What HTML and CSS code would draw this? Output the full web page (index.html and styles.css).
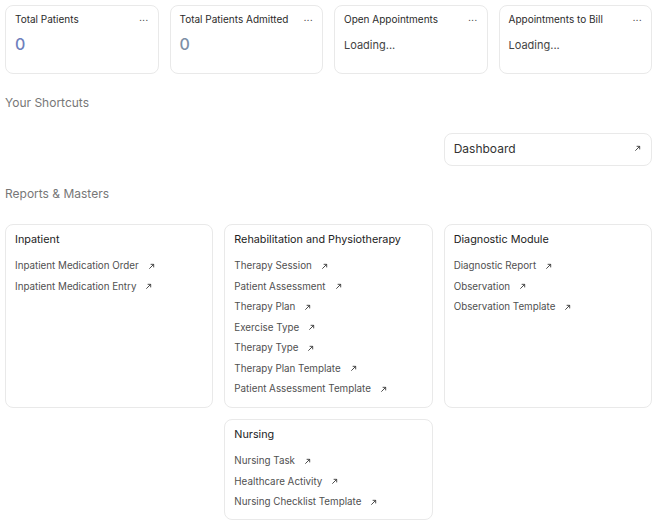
FILE: index.html
```html
<!DOCTYPE html>
<html lang="en">
<head>
	<meta charset="UTF-8">
	<title>Healthcare</title>
	<link rel="stylesheet" href="styles.css">
</head>
<body>
	<div class="page">
		<div class="numbers">
			<div class="num-card">
				<div class="num-head"><span>Total Patients</span><span class="dots">...</span></div>
				<div class="num-value blue">0</div>
			</div>
			<div class="num-card">
				<div class="num-head"><span>Total Patients Admitted</span><span class="dots">...</span></div>
				<div class="num-value grey">0</div>
			</div>
			<div class="num-card">
				<div class="num-head"><span>Open Appointments</span><span class="dots">...</span></div>
				<div class="num-loading">Loading...</div>
			</div>
			<div class="num-card">
				<div class="num-head"><span>Appointments to Bill</span><span class="dots">...</span></div>
				<div class="num-loading">Loading...</div>
			</div>
		</div>

		<h2 class="section-title">Your Shortcuts</h2>
		<div class="grid shortcuts">
			<div></div>
			<div></div>
			<a class="shortcut" href="javascript:;">
				<span>Dashboard</span>
				<svg class="arrow" viewBox="0 0 8 8"><path d="M1.5 6.5 L6.5 1.5 M3 1.5 H6.5 V5"/></svg>
			</a>
		</div>

		<h2 class="section-title">Reports &amp; Masters</h2>
		<div class="grid reports">
			<div class="link-card">
				<div class="card-title">Inpatient</div>
				<a class="link" href="javascript:;">Inpatient Medication Order<svg class="arrow" viewBox="0 0 8 8"><path d="M1.5 6.5 L6.5 1.5 M3 1.5 H6.5 V5"/></svg></a>
				<a class="link" href="javascript:;">Inpatient Medication Entry<svg class="arrow" viewBox="0 0 8 8"><path d="M1.5 6.5 L6.5 1.5 M3 1.5 H6.5 V5"/></svg></a>
			</div>
			<div class="link-card">
				<div class="card-title">Rehabilitation and Physiotherapy</div>
				<a class="link" href="javascript:;">Therapy Session<svg class="arrow" viewBox="0 0 8 8"><path d="M1.5 6.5 L6.5 1.5 M3 1.5 H6.5 V5"/></svg></a>
				<a class="link" href="javascript:;">Patient Assessment<svg class="arrow" viewBox="0 0 8 8"><path d="M1.5 6.5 L6.5 1.5 M3 1.5 H6.5 V5"/></svg></a>
				<a class="link" href="javascript:;">Therapy Plan<svg class="arrow" viewBox="0 0 8 8"><path d="M1.5 6.5 L6.5 1.5 M3 1.5 H6.5 V5"/></svg></a>
				<a class="link" href="javascript:;">Exercise Type<svg class="arrow" viewBox="0 0 8 8"><path d="M1.5 6.5 L6.5 1.5 M3 1.5 H6.5 V5"/></svg></a>
				<a class="link" href="javascript:;">Therapy Type<svg class="arrow" viewBox="0 0 8 8"><path d="M1.5 6.5 L6.5 1.5 M3 1.5 H6.5 V5"/></svg></a>
				<a class="link" href="javascript:;">Therapy Plan Template<svg class="arrow" viewBox="0 0 8 8"><path d="M1.5 6.5 L6.5 1.5 M3 1.5 H6.5 V5"/></svg></a>
				<a class="link" href="javascript:;">Patient Assessment Template<svg class="arrow" viewBox="0 0 8 8"><path d="M1.5 6.5 L6.5 1.5 M3 1.5 H6.5 V5"/></svg></a>
			</div>
			<div class="link-card">
				<div class="card-title">Diagnostic Module</div>
				<a class="link" href="javascript:;">Diagnostic Report<svg class="arrow" viewBox="0 0 8 8"><path d="M1.5 6.5 L6.5 1.5 M3 1.5 H6.5 V5"/></svg></a>
				<a class="link" href="javascript:;">Observation<svg class="arrow" viewBox="0 0 8 8"><path d="M1.5 6.5 L6.5 1.5 M3 1.5 H6.5 V5"/></svg></a>
				<a class="link" href="javascript:;">Observation Template<svg class="arrow" viewBox="0 0 8 8"><path d="M1.5 6.5 L6.5 1.5 M3 1.5 H6.5 V5"/></svg></a>
			</div>
			<div></div>
			<div class="link-card">
				<div class="card-title">Nursing</div>
				<a class="link" href="javascript:;">Nursing Task<svg class="arrow" viewBox="0 0 8 8"><path d="M1.5 6.5 L6.5 1.5 M3 1.5 H6.5 V5"/></svg></a>
				<a class="link" href="javascript:;">Healthcare Activity<svg class="arrow" viewBox="0 0 8 8"><path d="M1.5 6.5 L6.5 1.5 M3 1.5 H6.5 V5"/></svg></a>
				<a class="link" href="javascript:;">Nursing Checklist Template<svg class="arrow" viewBox="0 0 8 8"><path d="M1.5 6.5 L6.5 1.5 M3 1.5 H6.5 V5"/></svg></a>
			</div>
		</div>
	</div>
</body>
</html>
```

FILE: styles.css
```css
*{padding:0; margin:0; box-sizing:border-box;}
body{background:#fff; font-family:Inter, "Liberation Sans", sans-serif; color:#383838;}
a{text-decoration:none; color:inherit;}
.page{padding:5px 4px 0 5px;}

.numbers{display:grid; grid-template-columns:repeat(4, 1fr); gap:11px;}
.num-card{height:69px; border:1px solid #e9e9e9; border-radius:8px; padding:7px 9px 0 9px;}
.num-head{display:flex; justify-content:space-between; align-items:center; font-size:10px; color:#2b2b2b; height:12px;}
.dots{font-size:9px; color:#555; position:relative; top:-2px; letter-spacing:0.5px;}
.num-value{font-size:16px; font-weight:500; margin-top:10px; line-height:18px;}
.num-value.blue{color:#6e80bd;}
.num-value.grey{color:#7d8fa6;}
.num-loading{font-size:11px; color:#444; margin-top:14px; line-height:13px;}

.section-title{font-size:12px; font-weight:400; color:#777; line-height:14px;}
.numbers + .section-title{margin-top:22px;}
.grid{display:grid; grid-template-columns:repeat(3, 1fr); column-gap:11px; row-gap:11px;}
.shortcuts{margin-top:23px;}
.shortcut{display:flex; justify-content:space-between; align-items:center; height:33px; border:1px solid #e9e9e9; border-radius:8px; padding:0 10px 2px 9px; font-size:12px; color:#333;}
.shortcuts + .section-title{margin-top:21px;}
.reports{margin-top:23px;}

.link-card{border:1px solid #e9e9e9; border-radius:8px; padding:8px 9px 5px 9px; min-height:184px;}
.reports .link-card:nth-child(5){min-height:101px;}
.card-title{font-size:10.8px; font-weight:400; color:#222; line-height:13px; margin-bottom:10px;}
.link{display:flex; align-items:center; font-size:9.8px; color:#505050; line-height:12px; padding:4px 0 4.5px 0;}
.arrow{width:7px; height:7px; margin-left:9px; fill:none; stroke:#333; stroke-width:1;}
.shortcut .arrow{margin-left:0;}
```
